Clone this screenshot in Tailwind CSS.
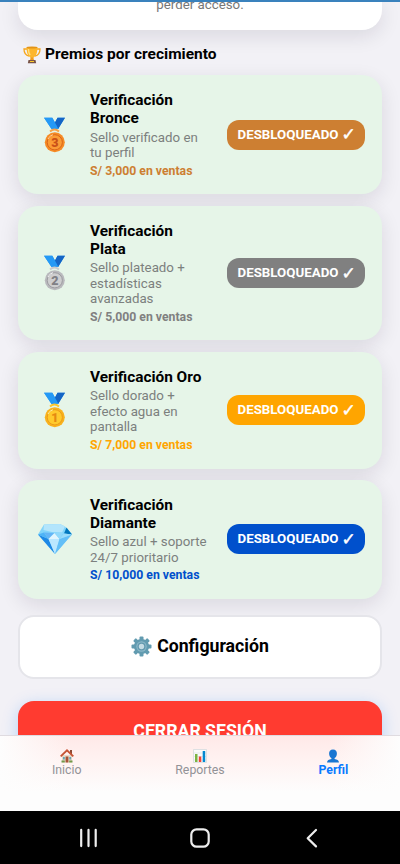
<!DOCTYPE html>
<html lang="es">
<head>
<meta charset="utf-8">
<meta name="viewport" content="width=device-width, initial-scale=1">
<title>Perfil</title>
<script src="https://cdn.jsdelivr.net/npm/@tailwindcss/browser@4"></script>
</head>
<body class="relative h-[864px] w-[400px] overflow-hidden bg-[#f2f1f6] font-['Roboto',sans-serif] text-black">
<svg class="hidden">
  <symbol id="ribbon" viewBox="0 0 22 36">
    <path d="M.5.8h8.3l2.7 4.8L14 .8h7.5L14.6 12H8z" fill="#2498f3"/>
    <path d="M14 .8h7.5L14.6 12h-3.3L8.8 7.7 11.5 5.6z" fill="#1565c5"/>
    <path d="M.5.8h8.3L15 12H8z" fill="#2599f5"/>
  </symbol>
</svg>
<main class="flex flex-col px-[18px]">
  <section class="h-[30px] rounded-b-[20px] bg-white text-center text-[13.3px] leading-[16px] text-[#777] shadow-[0_6px_20px_rgba(30,20,50,0.11)]"><p class="-mt-[4px] pt-px">perder acceso.</p></section>
  <h2 class="mt-[15px] mb-[10px] flex h-[20px] items-center gap-[4px] pl-[5px] text-[15.5px] font-bold">
    <svg class="h-[18px] w-[18px]" viewBox="0 0 18 18">
      <path d="M4 3H1q0 6 5 7M14 3h3q0 6-5 7" fill="none" stroke="#f5a51b" stroke-width="1.3"/>
      <path d="M3.6 1h10.8q.2 7-2.6 9.4L10.2 12v2H7.8v-2l-1.6-1.6Q3.4 8 3.6 1z" fill="#fdb62c"/>
      <path d="M5.5 3q0 4.500 1.700 6" fill="none" stroke="#ffe082" stroke-width="1.300"/>
      <ellipse cx="9" cy="1.500" rx="5.400" ry="1" fill="#e39316"/>
      <path d="M7.800 11.500h2.400l.8 2.800H7z" fill="#ef9a20"/><path d="M5.500 14h7l.7 3.300H4.800z" fill="#795548"/><path d="M7 15h4v1H7z" fill="#ffca28"/>
    </svg>
    <span>Premios por crecimiento</span>
  </h2>
  <div class="flex flex-col gap-[11.3px]">
    <article class="flex items-center rounded-[20px] bg-[#e6f5e8] py-[16px] pr-[17.500px] pl-[18px] shadow-[0_6px_20px_rgba(30,20,50,0.11)]">
      <svg class="mr-[17px] h-[36px] w-[37px] shrink-0" viewBox="-7.500 0 37 36"><use href="#ribbon" width="22" height="36"/><path d="M6.500 14.500q4.500-4 9 0" fill="none" stroke="#f6a34a" stroke-width="1.800"/><circle cx="11.300" cy="25.300" r="10" fill="#f68b25"/><circle cx="11.300" cy="25.300" r="7.600" fill="#fb9c36" stroke="#d9651b"/><path d="M4.500 22a7.500 7.500 0 0 1 5-4.300" stroke="#ffd29c" fill="none"/><text x="11.300" y="29.800" text-anchor="middle" font-size="12.500" font-weight="900" fill="#c95018">3</text></svg>
      <div class="w-[124px]"><h3 class="text-[15.4px] leading-[18px] font-bold">Verificación<br>Bronce</h3><p class="mt-[2.500px] text-[13.3px] leading-[15.600px] text-[#7c807e]">Sello verificado en<br>tu perfil</p><p class="mt-[3px] text-[12.25px] leading-[14.600px] font-bold text-[#cd7f32]">S/ 3,000 en ventas</p></div>
      <span class="ml-auto flex h-[30px] w-[138px] items-center justify-center gap-[3px] rounded-[12px] bg-[#cd7f32] text-[13.3px] font-bold text-white"><span>DESBLOQUEADO</span><span class="w-[12px] font-['DejaVu_Sans'] text-[17px] leading-none [-webkit-text-stroke:0.5px_white]">✓</span></span>
    </article>
    <article class="flex items-center rounded-[20px] bg-[#e6f5e8] py-[16px] pr-[17.500px] pl-[18px] shadow-[0_6px_20px_rgba(30,20,50,0.11)]">
      <svg class="mr-[17px] h-[36px] w-[37px] shrink-0" viewBox="-7.500 0 37 36"><use href="#ribbon" width="22" height="36"/><path d="M6.500 14.500q4.500-4 9 0" fill="none" stroke="#c9c9cc" stroke-width="1.800"/><circle cx="11.300" cy="25.300" r="10" fill="#b9b9bd"/><circle cx="11.300" cy="25.300" r="7.600" fill="#cececf" stroke="#9c9ca0"/><path d="M4.500 22a7.500 7.500 0 0 1 5-4.300" stroke="#f3f3f3" fill="none"/><text x="11.300" y="29.800" text-anchor="middle" font-size="12.500" font-weight="900" fill="#808085">2</text></svg>
      <div class="w-[124px]"><h3 class="text-[15.4px] leading-[18px] font-bold">Verificación<br>Plata</h3><p class="mt-[2.500px] text-[13.3px] leading-[15.600px] text-[#7c807e]">Sello plateado +<br>estadísticas<br>avanzadas</p><p class="mt-[3px] text-[12.25px] leading-[14.600px] font-bold text-[#808080]">S/ 5,000 en ventas</p></div>
      <span class="ml-auto flex h-[30px] w-[138px] items-center justify-center gap-[3px] rounded-[12px] bg-[#808080] text-[13.3px] font-bold text-white"><span>DESBLOQUEADO</span><span class="w-[12px] font-['DejaVu_Sans'] text-[17px] leading-none [-webkit-text-stroke:0.5px_white]">✓</span></span>
    </article>
    <article class="flex items-center rounded-[20px] bg-[#e6f5e8] py-[16px] pr-[17.500px] pl-[18px] shadow-[0_6px_20px_rgba(30,20,50,0.11)]">
      <svg class="mr-[17px] h-[36px] w-[37px] shrink-0" viewBox="-7.500 0 37 36"><use href="#ribbon" width="22" height="36"/><path d="M6.500 14.500q4.500-4 9 0" fill="none" stroke="#fdc62c" stroke-width="1.800"/><circle cx="11.300" cy="25.300" r="10" fill="#f9b21d"/><circle cx="11.300" cy="25.300" r="7.600" fill="#ffca2d" stroke="#eb9b1a"/><path d="M4.500 22a7.500 7.500 0 0 1 5-4.300" stroke="#fff0a0" fill="none"/><text x="11.300" y="29.800" text-anchor="middle" font-size="12.500" font-weight="900" fill="#e58a12">1</text></svg>
      <div class="w-[124px]"><h3 class="text-[15.4px] leading-[18px] font-bold">Verificación Oro</h3><p class="mt-[2.500px] text-[13.3px] leading-[15.600px] text-[#7c807e]">Sello dorado +<br>efecto agua en<br>pantalla</p><p class="mt-[3px] text-[12.25px] leading-[14.600px] font-bold text-[#ffa500]">S/ 7,000 en ventas</p></div>
      <span class="ml-auto flex h-[30px] w-[138px] items-center justify-center gap-[3px] rounded-[12px] bg-[#ffa500] text-[13.3px] font-bold text-white"><span>DESBLOQUEADO</span><span class="w-[12px] font-['DejaVu_Sans'] text-[17px] leading-none [-webkit-text-stroke:0.5px_white]">✓</span></span>
    </article>
    <article class="-mt-[0.400px] flex items-center rounded-[20px] bg-[#e6f5e8] py-[16px] pr-[17.500px] pl-[18px] shadow-[0_6px_20px_rgba(30,20,50,0.11)]">
      <svg class="mr-[17px] h-[36px] w-[37px] shrink-0" viewBox="0 0 37 36"><path d="M8 3.500 24 3l5 2.500 7 7.500-17 20L2 13.500z" fill="#81d4fa"/><path d="M8 3.500 24 3l5 2.500-3 6-10-.5L7.500 9z" fill="#b3e5fc"/><path d="M2 13.500 12.500 18 19 33z" fill="#1e88e5"/><path d="M2 13.500 8 11.500l4.500 6.500z" fill="#4fb3f6"/><path d="m8 11.500 10.500.5-6 6z" fill="#64b5f6"/><path d="m18.500 12 5 6-11 0z" fill="#e1f5fe"/><path d="m18.500 12 9-.5-4 6.500z" fill="#90d8fb"/><path d="M12.500 18h11L19 33z" fill="#bbe7ff"/><path d="M23.500 18 36 13.500 19 33z" fill="#64bff7"/><path d="m30.500 6.500 5.500 7-8-1z" fill="#0277bd"/><path d="m28 12.500 8 1L23.500 18z" fill="#9bdcfb"/></svg>
      <div class="w-[124px]"><h3 class="text-[15.4px] leading-[18px] font-bold">Verificación<br>Diamante</h3><p class="mt-[2.500px] text-[13.3px] leading-[15.600px] text-[#7c807e]">Sello azul + soporte<br>24/7 prioritario</p><p class="mt-[3px] text-[12.25px] leading-[14.600px] font-bold text-[#0050cc]">S/ 10,000 en ventas</p></div>
      <span class="ml-auto flex h-[30px] w-[138px] items-center justify-center gap-[3px] rounded-[12px] bg-[#0050cc] text-[13.3px] font-bold text-white"><span>DESBLOQUEADO</span><span class="w-[12px] font-['DejaVu_Sans'] text-[17px] leading-none [-webkit-text-stroke:0.5px_white]">✓</span></span>
    </article>
  </div>
  <button class="mt-[15.900px] flex h-[64px] items-center justify-center gap-[5px] rounded-[16px] border-2 border-[#e5e5ea] bg-white text-[17.7px] font-bold">
    <svg class="h-[21px] w-[21px]" viewBox="-10.500 -10.500 21 21"><g fill="#629bb0"><circle r="7.600"/><g id="teeth"><rect x="-2" y="-10" width="4" height="20" rx="1"/><rect x="-10" y="-2" width="20" height="4" rx="1"/></g><use href="#teeth" transform="rotate(45)"/></g><circle r="5.200" fill="#8bb8c8"/><circle r="4" fill="#6299af"/><circle r="2.700" fill="#c5dce4"/></svg>
    <span>Configuración</span>
  </button>
  <button class="mt-[22px] h-[61px] rounded-[16px] bg-[#ff3b30] text-[17.7px] font-bold text-white shadow-[0_4px_16px_rgba(0,122,255,0.25)]">CERRAR SESIÓN</button>
</main>
<footer class="absolute inset-x-0 bottom-0">
  <nav class="grid h-[76px] grid-cols-3 border-t border-[#dfdbe0] bg-[linear-gradient(to_right,#fdfdfd_0%,transparent_18%,transparent_82%,#fdfdfd_100%),linear-gradient(to_bottom,#ffe9e8_0%,#fff3f2_35%,#fdfdfd_75%)] pt-[13px] text-[12.3px] leading-[14px] text-[#929297]">
    <div class="flex flex-col items-center"><svg class="h-[14px] w-[14px]" viewBox="0 0 14 14"><path d="M2 6h10v7.500H2z" fill="#e8d9c8"/><path d="M10 1h2v4h-2z" fill="#8c4a35"/><path d="m.7 7.400 6.300-6 6.300 6" fill="none" stroke="#c65435" stroke-width="1.900"/><path d="M5.600 7.500h2.800v6H5.600z" fill="#a75235"/><path d="M3 8h1.800v2.500H3zM9.300 8h1.800v2.500H9.300z" fill="#65a5b5"/><path d="M1.500 11.500h3.300v2H1.500zM9.200 11.500h3.300v2H9.200z" fill="#72994b"/></svg><span>Inicio</span></div>
    <div class="flex flex-col items-center"><svg class="h-[14px] w-[14px]" viewBox="0 0 14 14"><path d="M.5.500h13v13H.5z" fill="#fafafa" stroke="#d0d7db" stroke-width=".7"/><path d="M1 4h12M1 7.500h12M1 11h12" stroke="#d9e1e4" stroke-width=".6"/><path d="M2 5h2.500v8H2z" fill="#7cb342"/><path d="M5.800 7.500h2.500V13H5.800z" fill="#f44336"/><path d="M9.700 2h2.500v11H9.700z" fill="#0288d1"/></svg><span>Reportes</span></div>
    <div class="flex flex-col items-center font-bold text-[#0a7aff]"><svg class="h-[14px] w-[14px]" viewBox="0 0 14 14"><path d="M7 .5c2.700 0 4 1.700 3.900 4.200C10.800 7 9.800 8.300 8.600 9v1c2.500.5 4.200 1.200 4.400 3.500H1C1.200 11.200 2.900 10.500 5.400 10V9C4.200 8.300 3.200 7 3.100 4.700 3 2.200 4.300.500 7 .500z" fill="#1976d2"/></svg><span>Perfil</span></div>
  </nav>
  <div class="grid h-[53px] grid-cols-[88px_112px_112px_88px] bg-black">
    <svg class="col-start-1 ml-[78px] mt-[17px] h-[20px] w-[20px]" viewBox="0 0 20 20" fill="none" stroke="#eee" stroke-width="2.200" stroke-linecap="round"><path d="M3.200 1.900v16.200M10.500 1.900v16.200M17.700 1.900v16.200"/></svg>
    <svg class="col-start-2 ml-[102px] mt-[17px] h-[20px] w-[20px]" viewBox="0 0 20 20" fill="none" stroke="#eee" stroke-width="2.200"><rect x="1.300" y="1.300" width="17.400" height="17.400" rx="5.300"/></svg>
    <svg class="col-start-3 ml-[101px] mt-[17px] h-[20px] w-[20px]" viewBox="0 0 20 20" fill="none" stroke="#eee" stroke-width="2.200" stroke-linecap="round" stroke-linejoin="round"><path d="m15 2-8.300 8.200 8.300 8.200"/></svg>
  </div>
</footer>
<div class="absolute inset-x-0 top-0 h-[2px] bg-[#3a82bd]"></div>
</body>
</html>
